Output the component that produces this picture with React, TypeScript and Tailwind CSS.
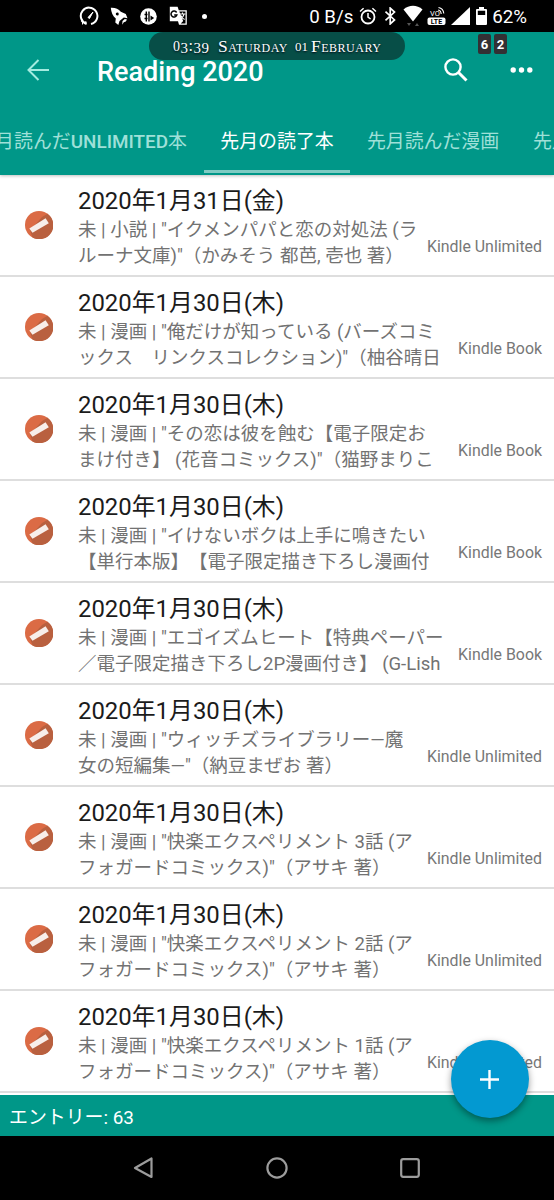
import React from 'react'

interface Entry {
    date: string
    lines: [string, string]
    source: string
}

const entries: Entry[] = [
    { date: '2020年1月31日(金)', lines: ['未 | 小説 | "イクメンパパと恋の対処法 (ラ', 'ルーナ文庫)"（かみそう 都芭, 壱也 著）'], source: 'Kindle Unlimited' },
    { date: '2020年1月30日(木)', lines: ['未 | 漫画 | "俺だけが知っている (バーズコミ', 'ックス　リンクスコレクション)"（柚谷晴日'], source: 'Kindle Book' },
    { date: '2020年1月30日(木)', lines: ['未 | 漫画 | "その恋は彼を蝕む【電子限定お', 'まけ付き】 (花音コミックス)"（猫野まりこ'], source: 'Kindle Book' },
    { date: '2020年1月30日(木)', lines: ['未 | 漫画 | "イけないボクは上手に鳴きたい', '【単行本版】【電子限定描き下ろし漫画付'], source: 'Kindle Book' },
    { date: '2020年1月30日(木)', lines: ['未 | 漫画 | "エゴイズムヒート【特典ペーパー', '／電子限定描き下ろし2P漫画付き】 (G-Lish'], source: 'Kindle Book' },
    { date: '2020年1月30日(木)', lines: ['未 | 漫画 | "ウィッチズライブラリー—魔', '女の短編集—"（納豆まぜお 著）'], source: 'Kindle Unlimited' },
    { date: '2020年1月30日(木)', lines: ['未 | 漫画 | "快楽エクスペリメント 3話 (ア', 'フォガードコミックス)"（アサキ 著）'], source: 'Kindle Unlimited' },
    { date: '2020年1月30日(木)', lines: ['未 | 漫画 | "快楽エクスペリメント 2話 (ア', 'フォガードコミックス)"（アサキ 著）'], source: 'Kindle Unlimited' },
    { date: '2020年1月30日(木)', lines: ['未 | 漫画 | "快楽エクスペリメント 1話 (ア', 'フォガードコミックス)"（アサキ 著）'], source: 'Kindle Unlimited' },
]

function StatusBar() {
    return (
        <div className="h-8 bg-black text-white flex items-center shrink-0">
            <div className="flex items-center ml-[79px]">
                <svg width="20" height="20" viewBox="0 0 20 20" fill="none" stroke="white" strokeWidth="2">
                    <path d="M7.5 17.8A8.3 8.3 0 1 1 12 18M2.6 14.5l1.2 1.4" />
                    <path d="M9 11.5l5-5.5-3.5 6.5z" fill="white" strokeWidth="1" />
                    <path d="M3.5 18.5v-3l1.7 1.8L7 15.5v3" strokeWidth="1" />
                </svg>
                <svg className="ml-[11px]" width="19" height="19" viewBox="0 0 19 19" fill="white">
                    <path fillRule="evenodd" d="M.8.8C5.200.5 8.500 2 10.800 4.800l5 2.200 1.700 4.200-3.700-.8L9.500 14l-1.200 4-3-2.500.5-4C2.800 9 1.200 5.500.8.8zm6.400 4.700a1.500 1.500 0 1 0 .1 3 1.500 1.500 0 0 0-.1-3z" />
                    <path d="M12.500 14l2.300-2 2.200.5-1.200 2-2 .8-1.600 2.500z" />
                </svg>
                <svg className="ml-[11px]" width="17" height="17" viewBox="0 0 17 17">
                    <circle cx="8.500" cy="8.500" r="8.300" fill="white" />
                    <path d="M6.300 3.500v10M9 3.500v10M4.500 6.500h3M4.500 10.500h3" stroke="black" strokeWidth="1.400" />
                    <path d="M10.500 7.500v5l3.700-2.500z" fill="black" />
                </svg>
                <svg className="ml-[12px]" width="19" height="20" viewBox="0 0 19 20">
                    <path d="M.8.8h7.800l1.200 3.400h8v14.500H10l-1-3.400H.8z" fill="white" />
                    <path d="M10.300 5.500h6.200v11.900h-4.800l2.500-2.500z" fill="black" />
                    <path d="M7.600 6.500A3 3 0 1 0 7.900 8.900H5.200" fill="none" stroke="black" strokeWidth="1.500" />
                    <path d="M10.500 8h6M13.500 6.500V8M15 8c-.4 2.500-2 4.300-4 5.300M11.800 9.500c.8 1.800 2 3.200 3.800 4" fill="none" stroke="white" strokeWidth="1.100" />
                </svg>
                <div className="ml-[14px] w-[5px] h-[5px] rounded-full bg-white" />
            </div>
            <div className="ml-auto mr-[27px] flex items-center">
                <span className="text-[18.700px] leading-8 pt-[2px] whitespace-pre">0 B/s</span>
                <svg className="ml-[6px]" width="18" height="18" viewBox="0 0 18 18" fill="none" stroke="white" strokeWidth="1.800">
                    <circle cx="9" cy="10" r="6.500" />
                    <path d="M9 6v4.200l2.600 1.800M1 4.500L4.600 1.300M17 4.500l-3.600-3.200" strokeWidth="1.500" />
                </svg>
                <svg className="ml-[7px]" width="13" height="18" viewBox="0 0 13 18" fill="none" stroke="white" strokeWidth="1.700">
                    <path d="M1.500 4.700l9 8.200-4.300 4V1.100l4.300 4-9 8.200" />
                </svg>
                <svg className="ml-[6px]" width="20" height="22" viewBox="0 0 20 22">
                    <path d="M.5 4.500c5.500-5 13.500-5 19 0L10 16.500z" fill="white" />
                    <path d="M4 18h4l-2 3zM12 21h4l-2-3z" fill="#555" />
                </svg>
                <svg className="ml-[4px]" width="19" height="20" viewBox="0 0 19 20">
                    <rect x="0.500" y="11.500" width="18" height="7.500" rx="2" fill="white" />
                    <text x="9.500" y="17.800" textAnchor="middle" fontFamily="Roboto" fontWeight="700" fontSize="7" fill="black">LTE</text>
                    <text x="3" y="10" fontFamily="Roboto" fontSize="7.500" fill="white">VO</text>
                    <path d="M11 4c2 .3 3 1.800 3.200 4M11.500 1.500c3.200.6 5 2.800 5.300 6" fill="none" stroke="white" strokeWidth="1.100" />
                </svg>
                <svg className="ml-[5px]" width="19" height="18" viewBox="0 0 19 18">
                    <path d="M19 0v18H0z" fill="white" />
                </svg>
                <svg className="ml-[6px]" width="11" height="18" viewBox="0 0 11 18">
                    <path fillRule="evenodd" d="M3 0h5v2h2a1 1 0 0 1 1 1v14a1 1 0 0 1-1 1H1a1 1 0 0 1-1-1V3a1 1 0 0 1 1-1h2zM1.800 3.800V8h7.400V3.800z" fill="white" />
                </svg>
                <span className="ml-[5px] text-[18.700px] leading-8 pt-[2px]">62%</span>
            </div>
        </div>
    )
}

function ClockPill() {
    return (
        <div className="absolute left-[149px] top-0 w-[256px] h-7 rounded-[14px] bg-[#074e47] text-white flex items-center pl-[24px] whitespace-nowrap font-['Liberation_Serif',serif] text-[16px] leading-5 [text-shadow:0_1px_2px_#001]">
            <div className="w-[36px] flex items-center justify-between">
                <span className="text-[14px] pt-[1px]">0</span>
                <span className="text-[15px] pt-[4px]">3</span>
                <span>:</span>
                <span className="text-[15px] pt-[4px]">3</span>
                <span className="text-[15px] pt-[4px]">9</span>
            </div>
            <span className="ml-[9px] w-[77px] text-[17.500px] [font-variant:small-caps] tracking-[0.5px]">Saturday</span>
            <span className="w-[12px] text-[13px] pt-[2px]">01</span>
            <span className="ml-[4px] text-[17.500px] [font-variant:small-caps] tracking-[0.5px]">February</span>
        </div>
    )
}

function EntryIcon() {
    return (
        <svg className="ml-[25px] shrink-0" width="28" height="28" viewBox="0 0 28 28">
            <circle cx="14" cy="14" r="14" fill="#db6b45" />
            <path d="M17 6l5.500-3.200A14 14 0 0 1 7.500 26.400L5 19.500z" fill="#b9603f" />
            <path d="M4.300 17.500L20.600 7.200l3.200 5L7.500 21.800z" fill="#f7eeea" />
        </svg>
    )
}

export default function App() {
    return (
        <div className="w-[554px] h-[1200px] flex flex-col overflow-hidden bg-white font-[Roboto,'Noto_Sans_CJK_JP',sans-serif] [text-spacing-trim:space-all]">
            <StatusBar />

            <header className="relative h-[143px] shrink-0 bg-[#009788] flex flex-col shadow-[0_1px_3px_rgba(0,0,0,0.25)] z-10">
                <ClockPill />
                <div className="absolute left-[478px] top-[2px] flex gap-[3px] text-white text-[13px] font-bold leading-[21px]">
                    <span className="w-[13px] h-[20px] bg-[#333034] rounded-[2px] text-center">6</span>
                    <span className="w-[13px] h-[20px] bg-[#333034] rounded-[2px] text-center">2</span>
                </div>
                <div className="h-[76px] flex items-center text-white">
                    <svg className="ml-[27px]" width="22" height="22" viewBox="0 0 22 22" fill="none" stroke="#a4ebe0" strokeWidth="2">
                        <path d="M22 11H2M11.500 1L1.500 11l10 10" />
                    </svg>
                    <h1 className="ml-[48px] text-[27px] font-medium leading-8 pt-[3px]">Reading 2020</h1>
                    <svg className="ml-auto" width="24" height="24" viewBox="0 0 24 24" fill="none" stroke="white">
                        <circle cx="9" cy="9" r="7.600" strokeWidth="2.400" />
                        <path d="M14.500 14.500l8 8" strokeWidth="3" />
                    </svg>
                    <svg className="ml-[42px] mr-[21px]" width="23" height="6" viewBox="0 0 23 6" fill="white">
                        <circle cx="3.200" cy="3" r="2.700" />
                        <circle cx="11.500" cy="3" r="2.700" />
                        <circle cx="19.800" cy="3" r="2.700" />
                    </svg>
                </div>
                <nav className="h-[67px] flex items-stretch whitespace-nowrap text-[18.900px] leading-[67px] text-[#9fe0d8] overflow-hidden">
                    <div className="w-[204px] shrink-0 flex justify-end pr-[17px]">
                        <span>月読んだ<span className="font-medium">UNLIMITED</span>本</span>
                    </div>
                    <div className="h-[65px] w-[146px] shrink-0 text-center text-white border-b-[3px] border-[#7fcbc3]">先月の読了本</div>
                    <div className="w-[166px] shrink-0 text-center">先月読んだ漫画</div>
                    <div className="shrink-0 pl-[17px]">先月</div>
                </nav>
            </header>

            <main className="h-[920px] shrink-0 overflow-hidden">
                {entries.map((entry, i) => (
                    <div key={i} className="h-[102px] flex items-center border-b-2 border-[#dedede]">
                        <EntryIcon />
                        <div className="ml-[25px] h-full whitespace-nowrap pt-[11px]">
                            <div className="text-[23.900px] leading-[31px] text-[#1b1b1b]">{entry.date}</div>
                            <div className="text-[18.500px] leading-[26px] text-[#727272]">
                                <div>{entry.lines[0]}</div>
                                <div className="whitespace-pre">{entry.lines[1]}</div>
                            </div>
                        </div>
                        <div className="ml-auto mr-3 mt-[43px] text-[15.900px] leading-6 text-[#777] whitespace-nowrap">{entry.source}</div>
                    </div>
                ))}
            </main>

            <footer className="relative h-[41px] shrink-0 bg-[#009788] text-white text-[18.900px] leading-[43px] pt-[1px] pl-[9px]">
                エントリー: 63
                <button className="absolute left-[451px] top-[-55px] w-[78px] h-[78px] rounded-full bg-[#0399d1] flex items-center justify-center pr-[1px] shadow-[0_3px_7px_rgba(0,0,0,0.4)]">
                    <svg width="19" height="19" viewBox="0 0 19 19" stroke="white" strokeWidth="2.400">
                        <path d="M9.500 0v19M0 9.500h19" />
                    </svg>
                </button>
            </footer>

            <div className="flex-1 bg-black flex items-center">
                <svg className="ml-[133px]" width="21" height="22" viewBox="0 0 21 22" fill="none" stroke="#9c9c9c" strokeWidth="2.200" strokeLinejoin="round">
                    <path d="M18.500 1.500v18.500L2 11z" />
                </svg>
                <svg className="ml-[112px]" width="22" height="22" viewBox="0 0 22 22" fill="none" stroke="#9c9c9c" strokeWidth="2.200">
                    <circle cx="11" cy="11" r="9.600" />
                </svg>
                <svg className="ml-[112px]" width="20" height="20" viewBox="0 0 20 20" fill="none" stroke="#9c9c9c" strokeWidth="2.200">
                    <rect x="1.200" y="1.200" width="17.600" height="17.600" rx="2" />
                </svg>
            </div>
        </div>
    )
}
